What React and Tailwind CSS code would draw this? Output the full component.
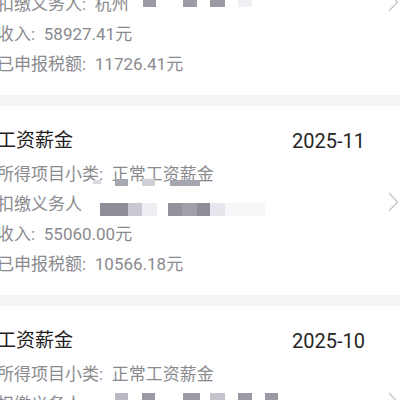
import React from "react";

const FONT = { fontFamily: '"Roboto", "Noto Sans CJK SC", sans-serif' };

function Chevron() {
  return (
    <svg width="11" height="20" viewBox="0 0 11 20" className="shrink-0 mr-[1px] mt-[2px]">
      <path d="M1.5 1.5 L9.5 10 L1.5 18.5" fill="none" stroke="#c6c6c8" strokeWidth="1.4" strokeLinecap="round" strokeLinejoin="round" />
    </svg>
  );
}

function Mask({ left, top = 0, w, h = 13, color }) {
  return (
    <span
      className="absolute blur-[0.6px]"
      style={{ left, top, width: w, height: h, background: color }}
    />
  );
}

function Card({ title, date, lines, masks }) {
  return (
    <div className="bg-white flex items-center">
      <div className="flex-1 ml-[-3px] mr-[23px] pt-[20px] pb-[16px]">
        <div className="h-[30px] flex items-center justify-between">
          <span className="text-[19px] text-[#1f1f1f]">{title}</span>
          <span className="text-[20px] text-[#262626]">{date}</span>
        </div>
        <div className="mt-[3px] text-[17px] text-[#8a8a8e]">
          {lines.map((l, i) => (
            <div key={i} className="relative h-[30px] leading-[30px] whitespace-nowrap">
              {l}
              {masks[i] && masks[i].map((m, j) => <Mask key={j} {...m} />)}
            </div>
          ))}
        </div>
      </div>
      <Chevron />
    </div>
  );
}

const S = ":\u2002";

export default function App() {
  return (
    <div className="w-[400px] h-[400px] overflow-hidden bg-[#f3f4f6]" style={FONT}>
      <div className="mt-[-94px] flex flex-col gap-[11px]">
        <Card
          title="工资薪金"
          date="2025-12"
          lines={["所得项目小类" + S + "正常工资薪金", "扣缴义务人" + S + "杭州", "收入" + S + "58927.41元", "已申报税额" + S + "11726.41元"]}
          masks={{
            1: [
              { left: 146, top: 5, w: 13, h: 13, color: "#9a9aa4" },
              { left: 186, top: 5, w: 14, h: 13, color: "#9c9ca6" },
              { left: 213, top: 5, w: 15, h: 13, color: "#9a9aa4" },
              { left: 241, top: 5, w: 14, h: 13, color: "#eef0f4" },
            ],
          }}
        />
        <Card
          title="工资薪金"
          date="2025-11"
          lines={["所得项目小类" + S + "正常工资薪金", "扣缴义务人", "收入" + S + "55060.00元", "已申报税额" + S + "10566.18元"]}
          masks={{
            0: [
              { left: 96, top: 21, w: 8, h: 4, color: "#d8d8de" },
              { left: 118, top: 20, w: 13, h: 7, color: "#a8a8b0" },
              { left: 145, top: 20, w: 13, h: 7, color: "#d0d0d6" },
              { left: 173, top: 21, w: 30, h: 6, color: "#a6a6ae" },
            ],
            1: [
              { left: 103, top: 14, w: 28, h: 13, color: "#8e8e98" },
              { left: 131, top: 14, w: 14, h: 13, color: "#c9c9d1" },
              { left: 145, top: 14, w: 15, h: 13, color: "#eceef2" },
              { left: 171, top: 14, w: 14, h: 13, color: "#92929c" },
              { left: 185, top: 14, w: 15, h: 13, color: "#a0a0a9" },
              { left: 200, top: 14, w: 13, h: 13, color: "#8e8e98" },
              { left: 213, top: 14, w: 15, h: 13, color: "#e6e7ec" },
              { left: 228, top: 14, w: 40, h: 13, color: "#f6f7f9" },
            ],
          }}
        />
        <Card
          title="工资薪金"
          date="2025-10"
          lines={["所得项目小类" + S + "正常工资薪金", "扣缴义务人", "收入" + S + "49871.20元", "已申报税额" + S + "9826.30元"]}
          masks={{
            1: [
              { left: 118, top: 4, w: 13, h: 13, color: "#b8b8c0" },
              { left: 145, top: 4, w: 13, h: 13, color: "#9a9aa4" },
              { left: 186, top: 4, w: 17, h: 13, color: "#9a9aa4" },
              { left: 213, top: 4, w: 15, h: 13, color: "#c4c4cc" },
              { left: 241, top: 4, w: 14, h: 13, color: "#9a9aa4" },
              { left: 268, top: 4, w: 13, h: 13, color: "#9a9aa4" },
            ],
          }}
        />
      </div>
    </div>
  );
}
